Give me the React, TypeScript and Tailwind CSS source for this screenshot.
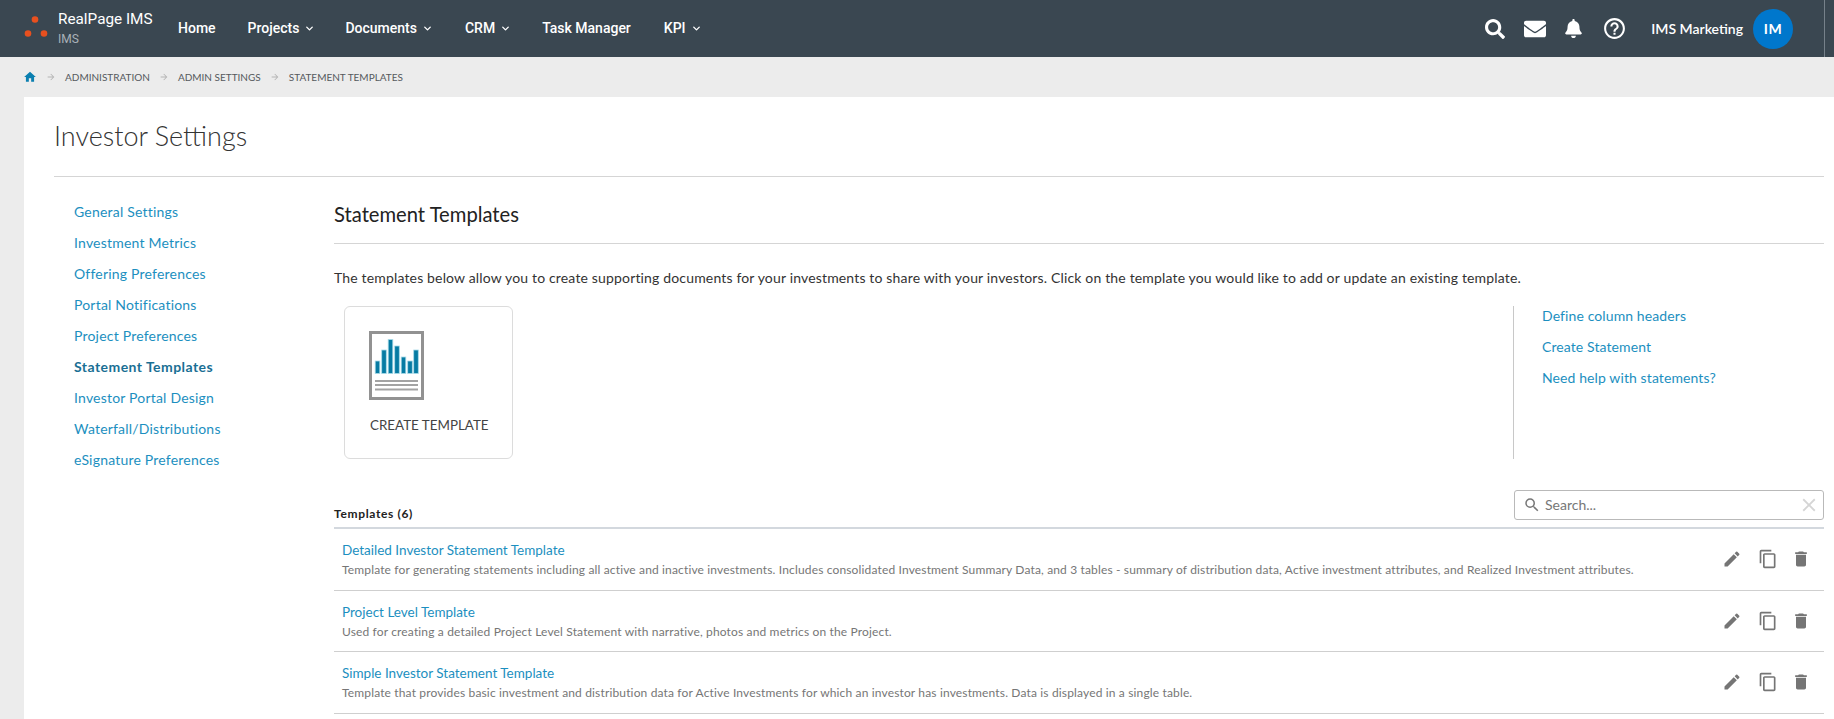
import { ChevronDown } from 'lucide-react';
import { FaBell, FaEnvelope, FaSearch } from 'react-icons/fa';
import { MdArrowForward, MdClose, MdContentCopy, MdDelete, MdEdit, MdHelpOutline, MdHome, MdSearch } from 'react-icons/md';

const NAV = [
  { label: 'Home', w: 'mr-[32px]' },
  { label: 'Projects', caret: true, w: 'mr-[30px]' },
  { label: 'Documents', caret: true, w: 'mr-[32px]' },
  { label: 'CRM', caret: true, w: 'mr-[31px]' },
  { label: 'Task Manager', w: 'mr-[33px]' },
  { label: 'KPI', caret: true, w: '' },
];

const SIDE = ['General Settings', 'Investment Metrics', 'Offering Preferences', 'Portal Notifications', 'Project Preferences', 'Statement Templates', 'Investor Portal Design', 'Waterfall/Distributions', 'eSignature Preferences'];

const CRUMBS = ['ADMINISTRATION', 'ADMIN SETTINGS', 'STATEMENT TEMPLATES'];

const TEMPLATES = [
  { name: 'Detailed Investor Statement Template', desc: 'Template for generating statements including all active and inactive investments. Includes consolidated Investment Summary Data, and 3 tables - summary of distribution data, Active investment attributes, and Realized Investment attributes.' },
  { name: 'Project Level Template', desc: 'Used for creating a detailed Project Level Statement with narrative, photos and metrics on the Project.' },
  { name: 'Simple Investor Statement Template', desc: 'Template that provides basic investment and distribution data for Active Investments for which an investor has investments. Data is displayed in a single table.' },
];

function Logo() {
  return (
    <svg width="26" height="26" viewBox="0 0 26 26" className="ml-[22px] mr-[10px] shrink-0">
      <circle cx="13" cy="3.5" r="3.3" fill="#e8501f" />
      <circle cx="6" cy="17.5" r="3.3" fill="#e8501f" />
      <circle cx="22" cy="17.5" r="3.3" fill="#e8501f" />
    </svg>
  );
}

function ReportIcon() {
  return (
    <svg width="55" height="69" viewBox="0 0 55 69" className="-ml-px">
      <rect x="1.5" y="1.5" width="52" height="66" fill="#fff" stroke="#929292" strokeWidth="3" />
      <g fill="#067ba3" stroke="#a9dbe8" strokeWidth="0.8">
        <rect x="6.2" y="30" width="4.6" height="12.5" />
        <rect x="12.7" y="19" width="4.6" height="23.5" />
        <rect x="19.2" y="8.5" width="4.6" height="34" />
        <rect x="25.7" y="15" width="4.6" height="27.5" />
        <rect x="32.2" y="26" width="4.6" height="16.5" />
        <rect x="38.7" y="30" width="4.6" height="12.5" />
        <rect x="44.7" y="19" width="4.6" height="23.5" />
      </g>
      <g fill="#a3a3a3">
        <rect x="6" y="49" width="43" height="2" />
        <rect x="6" y="53" width="43" height="2" />
        <rect x="6" y="57.5" width="43" height="2" />
      </g>
    </svg>
  );
}

function Header() {
  return (
    <header className="flex h-[57px] items-center bg-[#3a4751] text-white">
      <Logo />
      <div className="w-[120px] shrink-0">
        <div className="-mt-px text-[15.3px] leading-[20px] [font-family:Roboto,sans-serif]">RealPage IMS</div>
        <div className="mt-[2px] text-[12px] leading-[16px] text-[#aab2b8] [font-family:Roboto,sans-serif]">IMS</div>
      </div>
      <nav className="-mt-px flex items-center text-[14px] font-medium [font-family:Roboto,sans-serif]">
        {NAV.map((n) => (
          <span key={n.label} className={`flex items-center gap-[5px] ${n.w}`}>
            {n.label}
            {n.caret && <ChevronDown size={11} strokeWidth={3} />}
          </span>
        ))}
      </nav>
      <div className="ml-auto flex h-full items-center">
        <FaSearch size={20} className="mr-[19px]" />
        <FaEnvelope size={22} className="mr-[18px]" />
        <FaBell size={19} className="mr-[19px]" />
        <MdHelpOutline size={25} className="mr-[24px]" />
        <span className="mr-[10px] text-[14px] font-semibold">IMS Marketing</span>
        <span className="flex h-10 w-10 items-center justify-center rounded-full bg-[#0077cc] text-[14px] font-bold tracking-[0.5px]">IM</span>
        <span className="ml-[31px] mr-[9px] h-full w-px bg-[#76818a]" />
      </div>
    </header>
  );
}

function Breadcrumb() {
  return (
    <div className="flex h-10 items-center pl-[23px] text-[10px] text-[#55595c]">
      <MdHome size={14} className="text-[#0a7fb0]" />
      {CRUMBS.map((c) => (
        <span key={c} className="flex items-center">
          <MdArrowForward size={10} className="mx-[9px] text-[#b4b4b4]" />
          {c}
        </span>
      ))}
    </div>
  );
}

function TemplateRow({ name, desc }: { name: string; desc: string }) {
  return (
    <div className="flex h-[61.6px] items-start justify-between border-b border-[#cfcfcf] pl-2">
      <div>
        <a className="mt-[11px] block text-[13.5px] leading-[20px] text-[#1c8fc0]">{name}</a>
        <p className="text-[12px] leading-[20px] tracking-[0.15px] text-[#767676]">{desc}</p>
      </div>
      <div className="mt-[20px] mr-[13px] flex items-center gap-[16px] text-[#757575]">
        <MdEdit size={20} />
        <MdContentCopy size={20} />
        <MdDelete size={20} className="-ml-[3px]" />
      </div>
    </div>
  );
}

export default function App() {
  return (
    <div className="h-screen overflow-hidden bg-[#ececec] [font-family:Lato,sans-serif]">
      <Header />
      <Breadcrumb />
      <main className="ml-[24px] h-full bg-white pl-[30px] pr-[10px]">
        <h1 className="flex h-[80px] items-center border-b border-[#d5d5d5] text-[27px] font-light text-[#333]">Investor Settings</h1>
        <div className="flex">
          <aside className="w-[280px] shrink-0 pl-[20px] pt-[19px]">
            {SIDE.map((s) => (
              <a key={s} className={`block h-[31px] text-[14px] leading-[31px] ${s === 'Statement Templates' ? 'font-bold tracking-[0.45px] text-[#1a6f94]' : 'tracking-[0.2px] text-[#1c8fc0]'}`}>{s}</a>
            ))}
          </aside>
          <section className="min-w-0 flex-1">
            <h2 className="flex h-[67px] items-center border-b border-[#d5d5d5] pt-[8px] text-[20.2px] text-[#222]">Statement Templates</h2>
            <p className="mt-[24px] text-[14px] leading-[20px] tracking-[0.16px] text-[#333]">The templates below allow you to create supporting documents for your investments to share with your investors. Click on the template you would like to add or update an existing template.</p>
            <div className="mt-[18px] flex h-[153px] justify-between">
              <button className="ml-[10px] flex w-[169px] flex-col rounded-[6px] border border-[#dcdcdc] pl-[25px] pt-[24px] text-left">
                <ReportIcon />
                <span className="mt-[15px] text-[13.4px] text-[#444]">CREATE TEMPLATE</span>
              </button>
              <div className="w-[311px] border-l border-[#c8c8c8] pl-[28px] text-[14px] tracking-[0.1px] text-[#1c8fc0]">
                <a className="block h-[31px] leading-[20px]">Define column headers</a>
                <a className="block h-[31px] leading-[20px]">Create Statement</a>
                <a className="block h-[31px] leading-[20px]">Need help with statements?</a>
              </div>
            </div>
            <div className="mt-[32px] flex h-[38px] items-start justify-between border-b-2 border-[#d3d8de]">
              <span className="mt-[16px] text-[12px] font-bold leading-[14px] tracking-[0.65px] text-[#222]">Templates (6)</span>
              <div className="-mt-px flex h-[30px] w-[310px] items-center rounded-[3px] border border-[#b9b9b9] pl-2 pr-[3px] text-[14px] text-[#777]">
                <MdSearch size={18} className="mr-[4px]" />
                <span className="-mt-[2px] flex-1">Search...</span>
                <MdClose size={22} className="text-[#d5d5d5]" />
              </div>
            </div>
            {TEMPLATES.map((t) => (
              <TemplateRow key={t.name} name={t.name} desc={t.desc} />
            ))}
          </section>
        </div>
      </main>
    </div>
  );
}
